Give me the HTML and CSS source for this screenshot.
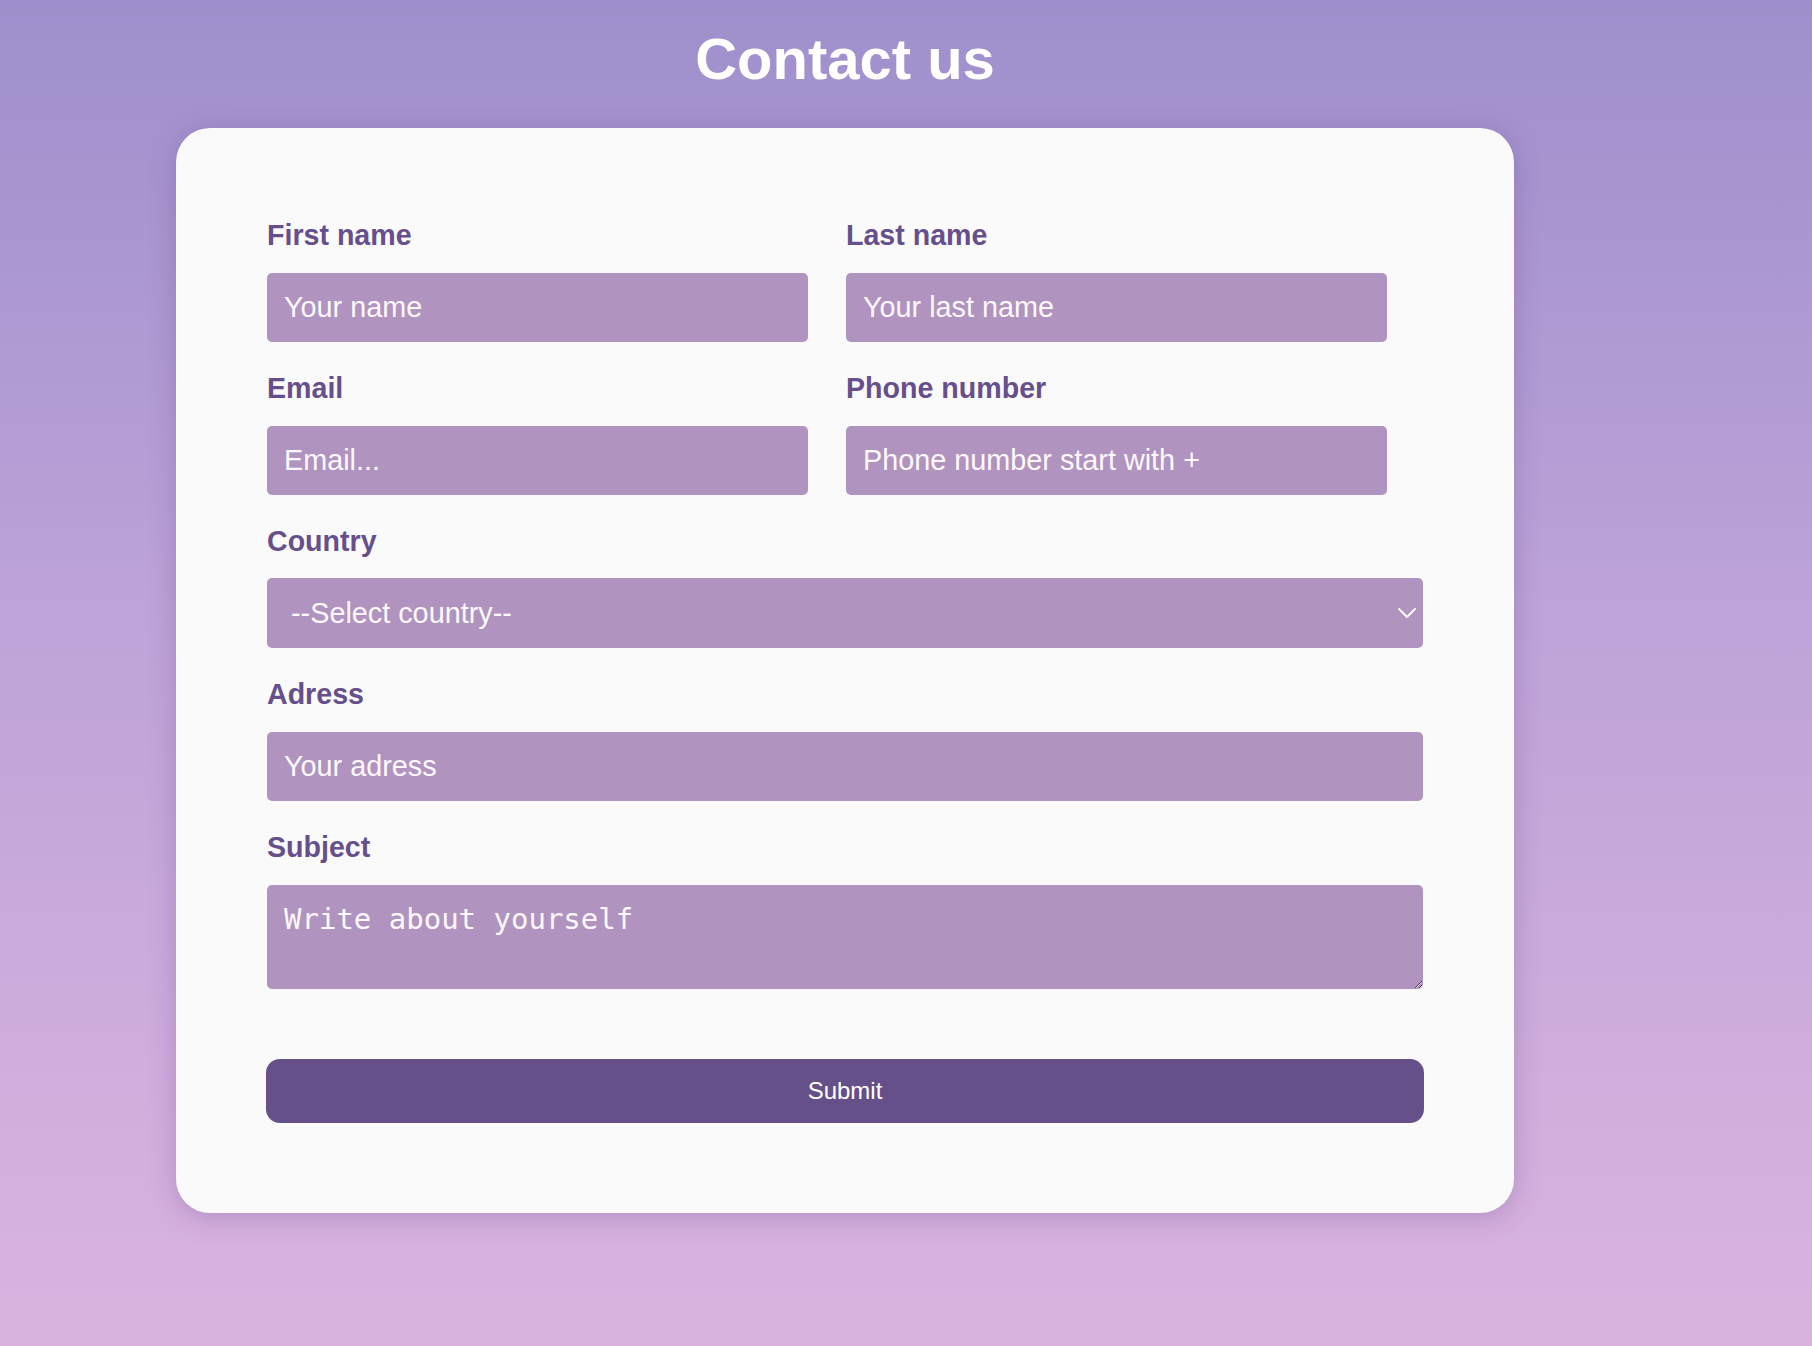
FILE: index.html
```html
<!DOCTYPE html>
<html lang="en">
<head>
<meta charset="utf-8">
<title>Contact us</title>
<link rel="stylesheet" href="styles.css">
</head>
<body>
<div class="page">
  <h1 class="title">Contact us</h1>
  <form class="card">
    <div class="row">
      <div class="field half">
        <label class="label" for="fname">First name</label>
        <input class="control" id="fname" type="text" placeholder="Your name">
      </div>
      <div class="field half">
        <label class="label" for="lname">Last name</label>
        <input class="control" id="lname" type="text" placeholder="Your last name">
      </div>
    </div>
    <div class="row">
      <div class="field half">
        <label class="label" for="email">Email</label>
        <input class="control" id="email" type="email" placeholder="Email...">
      </div>
      <div class="field half">
        <label class="label" for="phone">Phone number</label>
        <input class="control" id="phone" type="tel" placeholder="Phone number start with +">
      </div>
    </div>
    <div class="field">
      <label class="label" for="country">Country</label>
      <div class="select-wrap">
        <select class="control select" id="country">
          <option>--Select country--</option>
        </select>
        <svg class="chevron" width="18" height="10" viewBox="0 0 18 10" aria-hidden="true">
          <path d="M1 1 L9 9 L17 1" fill="none" stroke="#ffffff" stroke-width="1.8" stroke-linecap="round" stroke-linejoin="round"/>
        </svg>
      </div>
    </div>
    <div class="field">
      <label class="label" for="adress">Adress</label>
      <input class="control" id="adress" type="text" placeholder="Your adress">
    </div>
    <div class="field">
      <label class="label" for="subject">Subject</label>
      <textarea class="control area" id="subject" placeholder="Write about yourself"></textarea>
    </div>
    <button class="submit" type="button">Submit</button>
  </form>
</div>
</body>
</html>
```
FILE: styles.css
```css
html {
  height: 100%;
}

body {
  margin: 0;
  min-height: 100vh;
  background: linear-gradient(180deg, #9e8fcc 0%, #bda3d8 45%, #dab4df 100%);
  font-family: "Liberation Sans", Arial, sans-serif;
}

.page {
  width: 1338px;
  margin-left: 176px;
  padding-top: 26px;
  padding-bottom: 40px;
}

.title {
  margin: 0 0 36px;
  text-align: center;
  color: #ffffff;
  font-size: 58px;
  line-height: 66px;
  font-weight: 700;
}

.card {
  display: flex;
  flex-direction: column;
  background: #fafafa;
  border-radius: 34px;
  padding: 91px 91px 90px;
  box-shadow: 0 4px 28px rgba(90, 55, 130, 0.28);
}

.row {
  display: flex;
  gap: 38px;
}

.field {
  display: flex;
  flex-direction: column;
  margin-bottom: 30px;
}

.field.half {
  width: 541px;
}

.label {
  color: #664f8a;
  font-size: 28.6px;
  line-height: 32px;
  font-weight: 700;
  margin-bottom: 21.75px;
}

.control {
  box-sizing: border-box;
  width: 100%;
  height: 69px;
  border: none;
  border-radius: 5px;
  background: #b094bf;
  color: #ffffff;
  padding: 0 17px;
  font-family: "Liberation Sans", Arial, sans-serif;
  font-size: 28.8px;
  outline: none;
}

.control::placeholder {
  color: #fcf8fc;
  opacity: 1;
}

.select-wrap {
  position: relative;
}

.select {
  appearance: none;
  -webkit-appearance: none;
  height: 70px;
  padding-left: 24px;
  color: #fcf8fc;
}

.chevron {
  position: absolute;
  right: 7px;
  top: 30px;
  pointer-events: none;
}

.area {
  height: 104px;
  padding: 17px;
  resize: both;
  font-family: "DejaVu Sans Mono", "Liberation Mono", monospace;
  font-size: 29px;
  line-height: normal;
}

.submit {
  margin: 40px -1px 0;
  height: 64px;
  border: none;
  border-radius: 14px;
  background: #655089;
  color: #ffffff;
  font-family: "Liberation Sans", Arial, sans-serif;
  font-size: 24px;
  cursor: pointer;
}
```
